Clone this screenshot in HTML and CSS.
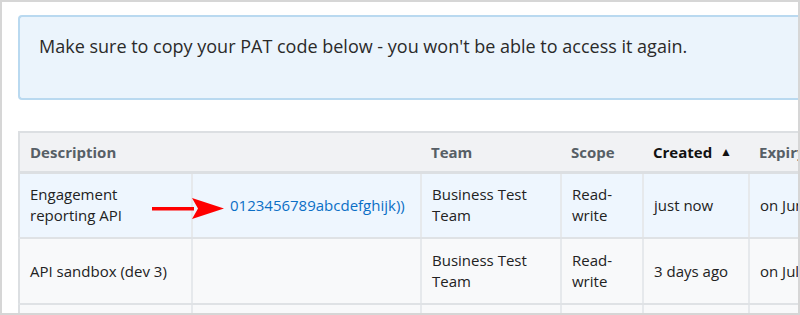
FILE: index.html
```html
<!DOCTYPE html>
<html lang="en">
<head>
  <meta charset="UTF-8">
  <title>Personal access tokens</title>
  <link rel="stylesheet" href="styles.css">
</head>
<body>
  <div class="frame">
    <div class="alert">
      Make sure to copy your PAT code below - you won't be able to access it again.
    </div>

    <div class="token-table-wrap">
      <table class="token-table">
        <colgroup>
          <col class="col-desc">
          <col class="col-code">
          <col class="col-team">
          <col class="col-scope">
          <col class="col-created">
          <col class="col-expiry">
        </colgroup>
        <thead>
          <tr>
            <th colspan="2">Description</th>
            <th>Team</th>
            <th>Scope</th>
            <th class="sorted">Created <span class="caret">&#9650;</span></th>
            <th>Expiry</th>
          </tr>
        </thead>
        <tbody>
          <tr class="new-token">
            <td>Engagement reporting API</td>
            <td class="code">
              <svg class="arrow" width="74" height="24" viewBox="0 0 74 24">
                <rect x="0" y="10" width="42" height="3.5" fill="#f00"/>
                <polygon points="40,1 72,11.5 40,22 46,11.5" fill="#f00"/>
              </svg>
              <a href="#">0123456789abcdefghijk))</a>
            </td>
            <td>Business Test Team</td>
            <td>Read-write</td>
            <td>just now</td>
            <td>on June 12</td>
          </tr>
          <tr>
            <td>API sandbox (dev 3)</td>
            <td class="code"></td>
            <td>Business Test Team</td>
            <td>Read-write</td>
            <td>3 days ago</td>
            <td>on July 9</td>
          </tr>
          <tr>
            <td>&nbsp;</td>
            <td></td>
            <td></td>
            <td></td>
            <td></td>
            <td></td>
          </tr>
        </tbody>
      </table>
    </div>
  </div>
</body>
</html>
```

FILE: styles.css
```css
* {
  box-sizing: border-box;
}

body {
  margin: 0;
  font-family: 'Open Sans', 'Noto Sans', sans-serif;
  color: #222;
  background: #fff;
}

.frame {
  width: 800px;
  height: 315px;
  border: 2px solid #d6d6d6;
  overflow: hidden;
  padding: 13px 0 0 16px;
}

.alert {
  background: #ebf4fc;
  border: 2px solid #b9d9f0;
  border-right: none;
  border-radius: 4px 0 0 4px;
  height: 85px;
  padding: 17px 0 0 19px;
  font-size: 18px;
  color: #2a2a2a;
  white-space: nowrap;
}

.token-table-wrap {
  margin-top: 31px;
}

.token-table {
  border-collapse: collapse;
  table-layout: fixed;
  width: 900px;
  font-size: 15px;
  border-top: 2px solid #dcdfe2;
  border-left: 2px solid #dcdfe2;
}

.col-desc { width: 173px; }
.col-code { width: 229px; }
.col-team { width: 140px; }
.col-scope { width: 82px; }
.col-created { width: 106px; }
.col-expiry { width: 170px; }

.token-table th {
  background: #f1f2f4;
  color: #575f66;
  text-align: left;
  font-weight: 700;
  height: 40px;
  padding: 0 10px;
  border-bottom: 3px solid #dcdfe2;
  white-space: nowrap;
}

.token-table th.sorted {
  color: #111;
}

.caret {
  font-size: 12px;
  margin-left: 4px;
  position: relative;
  top: -2px;
}

.token-table td {
  height: 66px;
  padding: 0 10px;
  line-height: 21px;
  background: #f8f9fa;
  border-bottom: 2px solid #dfe2e5;
  border-left: 2px solid #e6e9ec;
  vertical-align: middle;
}

.token-table td:first-child {
  border-left: none;
}

.token-table tr.new-token td {
  background: #eef6fe;
}

.token-table td.code {
  position: relative;
  padding-left: 37px;
}

.token-table td.code a {
  color: #0b6fc6;
  text-decoration: none;
}

.arrow {
  position: absolute;
  left: -41px;
  top: 23px;
}

.token-table td:last-child {
  white-space: nowrap;
}
```
